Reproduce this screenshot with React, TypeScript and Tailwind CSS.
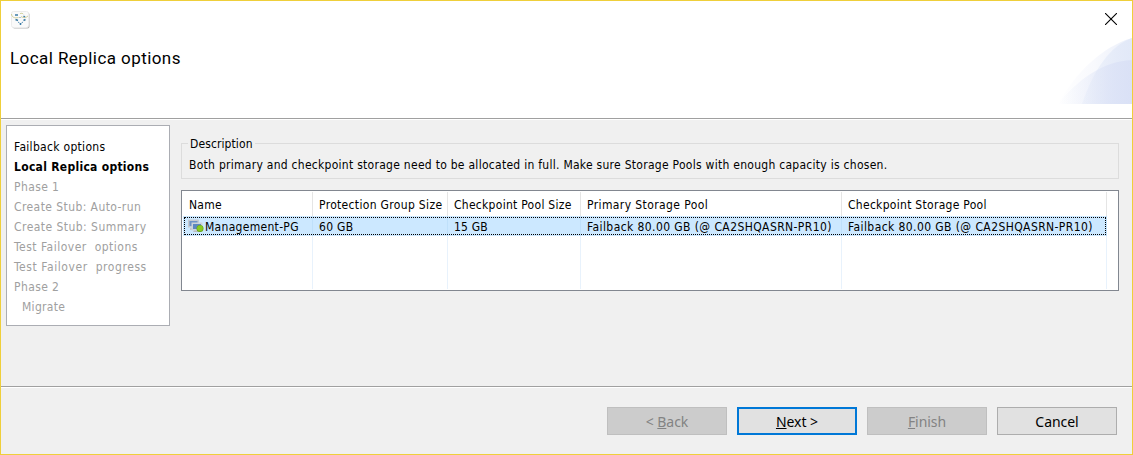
const steps = [
  { label: "Failback options", cls: "text-black tracking-[0.3px]" },
  { label: "Local Replica options", cls: "font-bold text-black tracking-[0.29px]" },
  { label: "Phase 1", cls: "text-[#a0a0a0] tracking-[0.4px]" },
  { label: "Create Stub: Auto-run", cls: "text-[#a0a0a0] tracking-[0.42px]" },
  { label: "Create Stub: Summary", cls: "text-[#a0a0a0] tracking-[0.46px]" },
  { label: "Test Failover  options", cls: "text-[#a0a0a0] tracking-[0.5px]" },
  { label: "Test Failover  progress", cls: "text-[#a0a0a0] tracking-[0.57px]" },
  { label: "Phase 2", cls: "text-[#a0a0a0] tracking-[0.4px]" },
  { label: "Migrate", cls: "pl-2 text-[#a0a0a0] tracking-[0.3px]" },
];

const columns = [
  { title: "Name", value: "Management-PG", width: "w-[131px]", head: "pl-[7px] tracking-[0.3px]", cell: "gap-px pl-[5px] tracking-[0.3px]" },
  { title: "Protection Group Size", value: "60 GB", width: "w-[135px]", head: "pl-[6px] tracking-[0.33px]", cell: "pl-[6px] tracking-[0.3px]" },
  { title: "Checkpoint Pool Size", value: "15 GB", width: "w-[133px]", head: "pl-[6px] tracking-[0.28px]", cell: "pl-[6px] tracking-[0.2px]" },
  { title: "Primary Storage Pool", value: "Failback 80.00 GB (@ CA2SHQASRN-PR10)", width: "w-[261px]", head: "pl-[6px] tracking-[0.4px]", cell: "pl-[6px] tracking-[0.41px]" },
  { title: "Checkpoint Storage Pool", value: "Failback 80.00 GB (@ CA2SHQASRN-PR10)", width: "w-[265px]", head: "pl-[6px] tracking-[0.29px]", cell: "pl-[6px] tracking-[0.41px]" },
];

function AppIcon() {
  return (
    <svg className="h-[18px] w-[19px]" viewBox="0 0 19 18" fill="none">
      <rect x="1.5" y="1.5" width="17" height="16" rx="2" fill="#b5b5b5" />
      <rect x="0.5" y="0.5" width="17" height="16" rx="2" fill="#fafafa" stroke="#ececec" />
      <path d="M0.500 3c0 3 3 4.500 7 3.500M17 5c-2 2-5 2-7 .5M9 2.800c1-1 3-.5 3.500 .5" stroke="#cfcf9c" />
      <path d="M4 4h3M12.500 5l1.500 1M4.500 8.500l2.500 1M14.500 8.500l-2 1M9.500 12v2" stroke="#3b7ba5" strokeWidth="1.500" />
      <path d="M8.500 6l1 1M7 11l1.500 1M12 11l-1.500 1" stroke="#5d93b8" />
    </svg>
  );
}

function GroupIcon() {
  return (
    <svg className="h-[14px] w-4 shrink-0" viewBox="0 0 16 14">
      <rect x="0" y="0.500" width="11" height="8" fill="#c5cad1" />
      <rect x="1.500" y="2" width="8" height="5" fill="#6d92c6" />
      <path d="M2 9h4v2H2z" fill="#c2c6ca" />
      <rect x="3.500" y="3.500" width="11" height="8" fill="#ccd2d9" />
      <rect x="5" y="5" width="8" height="5" fill="#5d87bf" />
      <path d="M6 11.500h5v1.500H5z" fill="#b9bdc1" />
      <circle cx="12" cy="9.500" r="3.500" fill="#65a518" />
      <circle cx="12" cy="9.200" r="2.800" fill="#8acb20" />
    </svg>
  );
}

function HeaderArt() {
  return (
    <svg className="absolute right-0 top-[37px] h-[66px] w-[74px]" viewBox="0 0 74 66">
      <defs>
        <linearGradient id="soft" x1="0" x2="1">
          <stop offset="0" stopColor="#ffffff" />
          <stop offset="0.500" stopColor="#f8f9fd" />
          <stop offset="1" stopColor="#eaeffa" />
        </linearGradient>
        <linearGradient id="mid" x1="0" x2="1">
          <stop offset="0" stopColor="#e2e9f8" stopOpacity="0.300" />
          <stop offset="1" stopColor="#e2e9f8" />
        </linearGradient>
        <linearGradient id="deep" x1="0" x2="1">
          <stop offset="0" stopColor="#dae1f6" stopOpacity="0" />
          <stop offset="0.400" stopColor="#dae1f6" stopOpacity="0.300" />
          <stop offset="1" stopColor="#dae1f6" />
        </linearGradient>
      </defs>
      <path d="M0 66C18 34 44 9 74 0V66Z" fill="url(#soft)" />
      <path d="M24 66C36 31 52 8 74 0V66Z" fill="url(#mid)" />
      <path d="M0 66C20 41 46 23 74 22V66Z" fill="url(#deep)" />
    </svg>
  );
}

const buttonBase =
  "flex h-7 w-[120px] items-center justify-center pt-px font-['Noto_Sans',sans-serif] text-[14px] leading-none tracking-[-0.05px]";

export default function App() {
  return (
    <div className="flex h-[455px] w-[1133px] flex-col overflow-hidden border border-[#efcf3a] bg-[#f0f0f0] font-['DejaVu_Sans_Condensed','DejaVu_Sans',sans-serif] text-[12px] text-black">
      <header className="relative h-[118px] shrink-0 border-b border-[#a0a0a0] bg-white">
        <div className="flex items-start justify-between pl-[10px] pr-[15px] pt-[10px]">
          <AppIcon />
          <svg className="mt-[2px] h-3 w-3" viewBox="0 0 12 12" stroke="#000" strokeWidth="1.100">
            <path d="M0 0L12 12M12 0L0 12" />
          </svg>
        </div>
        <h1 className="ml-[9px] mt-[19px] w-fit whitespace-nowrap font-[Roboto,sans-serif] text-[17px] leading-5 tracking-[0.43px]">
          Local Replica options
        </h1>
        <HeaderArt />
      </header>

      <main className="flex h-[267px] shrink-0 gap-[11px] border-t border-white pl-[5px] pt-[5px]">
        <nav className="h-[201px] w-[164px] border border-[#abadb3] bg-white pl-[7px] pt-[11px]">
          {steps.map((s) => (
            <div key={s.label} className={`h-5 whitespace-pre leading-5 ${s.cls}`}>
              <span>{s.label}</span>
            </div>
          ))}
        </nav>

        <section className="flex w-[938px] flex-col pt-[18px]">
          <div className="h-9 border border-[#dcdcdc]">
            <div className="-mt-2 ml-[6px] h-4 w-fit bg-[#f0f0f0] px-[2px] leading-4 tracking-[0.1px]">Description</div>
            <p className="ml-[7px] mt-[5px] w-fit whitespace-nowrap leading-4 tracking-[0.275px]">
              Both primary and checkpoint storage need to be allocated in full. Make sure Storage Pools with enough capacity is chosen.
            </p>
          </div>

          <div className="relative mt-[11px] flex h-[101px] border border-[#828790] bg-white py-px">
            {columns.map((c, i) => (
              <div key={c.title} className={`flex shrink-0 flex-col ${c.width}`}>
                <div className={`h-6 whitespace-nowrap border-r border-[#e5e5e5] leading-[26px] ${c.head}`}>
                  <span>{c.title}</span>
                </div>
                <div className={i === 0 ? "pl-px" : ""}>
                  <div
                    className={`flex h-5 items-center whitespace-nowrap border-r border-[#bfe0fa] bg-[#cce8ff] leading-[18px] ${c.cell}`}
                  >
                    {i === 0 && <GroupIcon />}
                    <span className="mt-0.5">{c.value}</span>
                  </div>
                </div>
                <div className="flex-1 border-r border-[#e8f2fc]" />
              </div>
            ))}
            <div className="absolute left-[2px] top-[26px] h-[18px] w-[922px] border border-dotted border-black" />
          </div>
        </section>
      </main>

      <footer className="flex flex-1 border-t border-[#a0a0a0]">
        <div className="flex flex-1 justify-end gap-[10px] border-t border-white pr-[15px] pt-[19px]">
          <button className={`${buttonBase} border border-[#bfbfbf] bg-[#cccccc] text-[#838383]`}>
            <span>&lt; <u>B</u>ack</span>
          </button>
          <button className={`${buttonBase} border-2 border-[#0078d7] bg-[#e1e1e1]`}>
            <span><u>N</u>ext &gt;</span>
          </button>
          <button className={`${buttonBase} border border-[#bfbfbf] bg-[#cccccc] text-[#838383]`}>
            <span><u>F</u>inish</span>
          </button>
          <button className={`${buttonBase} border border-[#adadad] bg-[#e1e1e1]`}>
            <span>Cancel</span>
          </button>
        </div>
      </footer>
    </div>
  );
}
